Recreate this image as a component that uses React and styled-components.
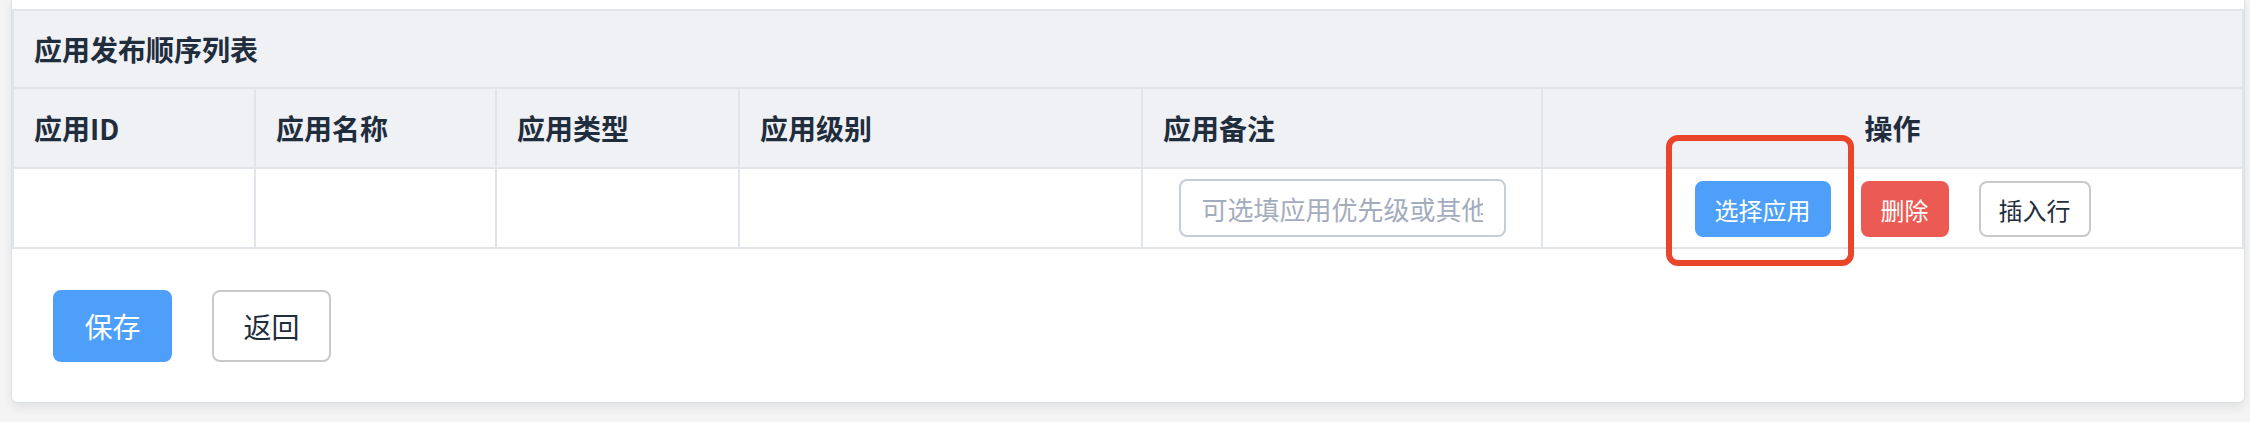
import React from "react";
import styled, { createGlobalStyle } from "styled-components";

const GlobalStyle = createGlobalStyle`
  html, body {
    margin: 0;
    padding: 0;
    background: #f4f4f5;
  }
  body {
    font-family: "Noto Sans CJK SC", "Noto Sans", "Liberation Sans", sans-serif;
    color: #1f2d3d;
  }
`;

const columns = ["应用ID", "应用名称", "应用类型", "应用级别", "应用备注"];

function App() {
  return (
    <Page>
      <GlobalStyle />
      <Card>
        <Grid>
          <TitleCell>应用发布顺序列表</TitleCell>
          {columns.map((name) => (
            <HeadCell key={name}>{name}</HeadCell>
          ))}
          <HeadCell center>操作</HeadCell>

          <BodyCell />
          <BodyCell />
          <BodyCell />
          <BodyCell />
          <BodyCell center>
            <RemarkInput placeholder="可选填应用优先级或其他" />
          </BodyCell>
          <BodyCell center>
            <Actions>
              <Marked>
                <SmallButton variant="primary">选择应用</SmallButton>
                <Highlight />
              </Marked>
              <SmallButton variant="danger">删除</SmallButton>
              <SmallButton>插入行</SmallButton>
            </Actions>
          </BodyCell>
        </Grid>

        <Footer>
          <BigButton variant="primary">保存</BigButton>
          <BigButton>返回</BigButton>
        </Footer>
      </Card>
    </Page>
  );
}

const Page = styled.div`
  padding: 0 5px 20px 11px;
`;

const Card = styled.div`
  background: #fff;
  border: 1px solid #d9e1e9;
  border-top: none;
  border-radius: 0 0 6px 6px;
  box-shadow: 0 5px 10px rgba(0, 0, 0, 0.07);
  padding-top: 9px;
`;

const Grid = styled.div`
  display: grid;
  grid-template-columns: 242px 241px 243px 403px 400px 1fr;
  border-top: 2px solid #e1e5eb;
  border-left: 2px solid #e1e5eb;
`;

const cellBase = `
  box-sizing: border-box;
  display: flex;
  align-items: center;
  border-right: 2px solid #e1e5eb;
  border-bottom: 2px solid #e1e5eb;
`;

const TitleCell = styled.div`
  ${cellBase}
  grid-column: 1 / -1;
  height: 78px;
  padding: 0 20px;
  background: #eff1f5;
  font-size: 28px;
  font-weight: 700;
  color: #1f2d3d;
`;

const HeadCell = styled.div`
  ${cellBase}
  height: 80px;
  padding: 0 20px;
  background: #eff1f5;
  font-size: 28px;
  font-weight: 700;
  color: #1f2d3d;
  justify-content: ${({ center }) => (center ? "center" : "flex-start")};
`;

const BodyCell = styled.div`
  ${cellBase}
  height: 80px;
  background: #fff;
  justify-content: ${({ center }) => (center ? "center" : "flex-start")};
`;

const RemarkInput = styled.input`
  box-sizing: border-box;
  width: 327px;
  height: 58px;
  padding: 0 21px;
  border: 2px solid #c6cdd9;
  border-radius: 8px;
  font-family: inherit;
  font-size: 26px;
  color: #1f2d3d;
  outline: none;
  &::placeholder {
    color: #a3acbd;
  }
`;

const Actions = styled.div`
  display: flex;
  align-items: center;
  gap: 30px;
  margin-top: 2px;
`;

const Marked = styled.span`
  position: relative;
  display: inline-flex;
`;

const Highlight = styled.span`
  position: absolute;
  left: -29px;
  top: -46px;
  width: 188px;
  height: 131px;
  box-sizing: border-box;
  border: 6px solid #e9452a;
  border-radius: 12px;
  pointer-events: none;
`;

const tones = {
  primary: { bg: "#4d9ffa", border: "#4d9ffa", color: "#fff" },
  danger: { bg: "#eb5a53", border: "#eb5a53", color: "#fff" },
  plain: { bg: "#fff", border: "#c9c9c9", color: "#1f2d3d" },
};

const SmallButton = styled.button`
  box-sizing: border-box;
  height: 56px;
  padding: 0 18px;
  border-radius: 8px;
  border: 2px solid ${({ variant }) => tones[variant || "plain"].border};
  background: ${({ variant }) => tones[variant || "plain"].bg};
  color: ${({ variant }) => tones[variant || "plain"].color};
  font-family: inherit;
  font-size: 24px;
  cursor: pointer;
`;

const Footer = styled.div`
  display: flex;
  gap: 40px;
  padding: 41px 41px 40px;
`;

const BigButton = styled.button`
  box-sizing: border-box;
  width: 119px;
  height: 72px;
  border-radius: 8px;
  border: 2px solid ${({ variant }) => tones[variant || "plain"].border};
  background: ${({ variant }) => tones[variant || "plain"].bg};
  color: ${({ variant }) => tones[variant || "plain"].color};
  font-family: inherit;
  font-size: 28px;
  cursor: pointer;
`;

export default App;
